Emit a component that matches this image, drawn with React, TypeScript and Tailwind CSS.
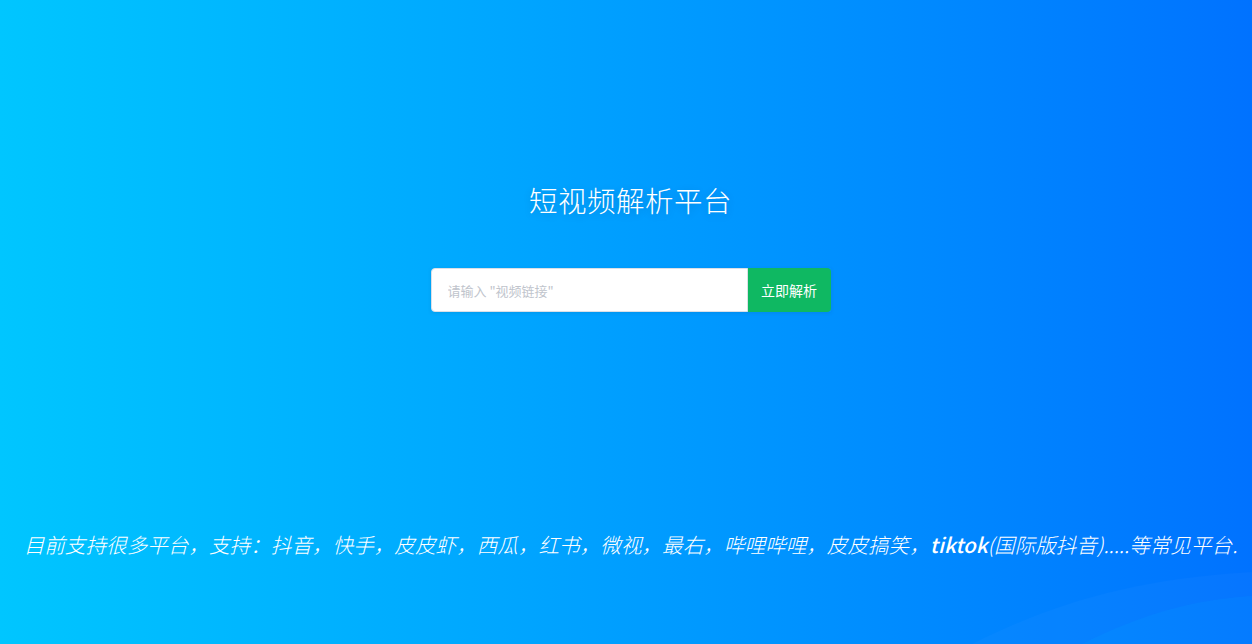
import React from 'react';

const cjk = '"Noto Sans CJK SC", "Noto Sans", sans-serif';

export default function App() {
  return (
    <div
      className="relative min-h-[644px] w-full overflow-hidden bg-gradient-to-r from-[#00c6ff] to-[#0072ff] text-white"
      style={{ fontFamily: cjk }}
    >
      {/* faint wave in the bottom-right corner */}
      <svg
        className="pointer-events-none absolute bottom-0 right-0 h-[110px] w-[280px]"
        viewBox="0 0 280 110"
        preserveAspectRatio="none"
      >
        <path d="M0 110 C 80 70, 160 45, 280 38 L280 110 Z" fill="#ffffff" fillOpacity="0.025" />
        <path d="M110 110 C 170 80, 220 66, 280 62 L280 110 Z" fill="#00c6ff" fillOpacity="0.08" />
      </svg>

      <div className="relative flex flex-col items-center pl-[9px] pt-[180px]">
        <h1 className="text-[28.5px] leading-[40px] font-light tracking-[0.5px] [text-shadow:0_2px_8px_rgba(0,0,0,0.15)]">
          短视频解析平台
        </h1>

        <div className="mt-[48px] flex h-[44px] w-[400px] shadow-[0_1px_4px_rgba(0,0,0,0.08)]">
          <input
            type="text"
            placeholder='请输入 "视频链接"'
            className="h-full w-[317px] rounded-l-[4px] border border-[#dcdfe6] bg-white px-4 text-[13px] text-[#606266] outline-none placeholder:text-[#c0c4cc]"
          />
          <button className="h-full flex-1 rounded-r-[4px] bg-[#0fb862] text-[14px] text-white">
            立即解析
          </button>
        </div>

        <p className="mt-[218px] w-full text-center text-[20.6px] leading-[28px] font-light italic">
          目前支持很多平台，支持：抖音，快手，皮皮虾，西瓜，红书，微视，最右，哔哩哔哩，皮皮搞笑，<span className="font-medium">tiktok</span>(国际版抖音).....等常见平台.
        </p>
      </div>
    </div>
  );
}
